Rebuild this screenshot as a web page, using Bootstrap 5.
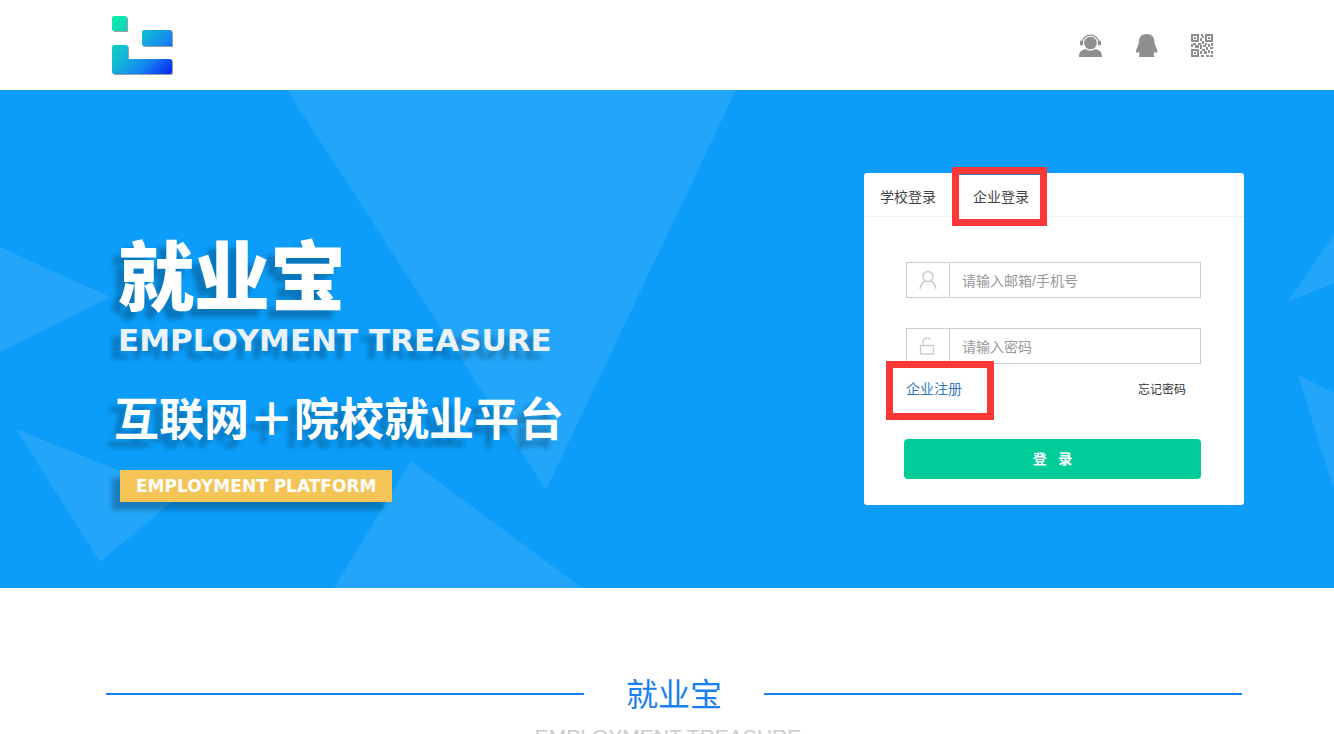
<!DOCTYPE html>
<html lang="zh-CN">
<head>
<meta charset="utf-8">
<meta name="viewport" content="width=device-width, initial-scale=1">
<title>就业宝</title>
<link href="https://cdn.jsdelivr.net/npm/bootstrap@5.3.0/dist/css/bootstrap.min.css" rel="stylesheet">
<style>
  body { font-family: "Liberation Sans", "Noto Sans CJK SC", sans-serif; font-size: 14px; color: #444; overflow: hidden; }
  .page-gutter { padding-left: 106px; padding-right: 90px; }
  .site-header { min-height: 90px; }
  .site-tools { gap: 32px; padding-right: 30px; color: #8f8f8f; }
  .hero { background: #0b9df9; min-height: 498px; }
  .hero-art { color: #23a6fa; }
  .hero-copy { color: #fff; padding: 144px 0 0 8px; text-shadow: -8px 8px 5px rgba(0, 0, 0, .25); }
  .hero-title { font-size: 76px; line-height: 90px; font-weight: 900; margin: 0 0 0 4px; }
  .hero-en { font-family: "DejaVu Sans", sans-serif; font-size: 31px; line-height: 32px; font-weight: 700; color: #eaf3fb; margin: 0 0 0 4px; }
  .hero-slogan { font-size: 45px; line-height: 60px; font-weight: 700; margin: 35px 0 0; }
  .hero-tag { background: #f5c456; font-family: "DejaVu Sans", sans-serif; font-size: 17px; line-height: 32px; font-weight: 700; padding: 0 16px; margin: 19px 0 0 6px; text-shadow: none; box-shadow: -8px 8px 5px rgba(0, 0, 0, .25); }
  .login-panel { width: 380px; margin-top: 83px; border-radius: 3px; }
  .login-tabs { border-bottom: 1px solid #f0f0f0; }
  .login-tabs .tab-btn { border: 0; border-top: 2px solid transparent; background: none; color: #444; height: 43px; padding: 3px 16px 0; line-height: 24px; }
  .login-tabs .tab-btn.active { border-top-color: #337ab7; }
  .login-tabs .tab-slot { margin-right: 5px; }
  .login-form { padding: 45px 43px 26px 42px; }
  .login-form .input-group { height: 36px; margin-bottom: 30px; }
  .login-form .input-group-text { width: 44px; background: #fff; border-color: #ccc; color: #ccc; padding: 0; }
  .login-form .form-control { font-size: 14px; border-color: #ccc; padding: 2px 12px 0; }
  .login-form .form-control::placeholder { color: #999; opacity: 1; }
  .login-form .input-group.last-field { margin-bottom: 0; }
  .login-links { height: 75px; padding: 15px 15px 0 0; line-height: 20px; }
  .login-links a { text-decoration: none; }
  .register-link { color: #337ab7; }
  .forgot-link { color: #333; font-size: 12px; line-height: 22px; }
  .btn-login { height: 40px; background: #00cc99; color: #fff; font-size: 14px; font-weight: 700; border-radius: 4px; margin-left: -2px; width: calc(100% + 2px); }
  .btn-login:hover { background: #00b888; color: #fff; }
  .callout { border: 7px solid #fb3838; pointer-events: none; z-index: 6; }
  .callout-tab { inset: -6px -2px -10px -5px; }
  .callout-register { inset: -18px -32px -21px -20px; }
  .section-head { padding-top: 80px; padding-right: 92px; }
  .section-rule { height: 2px; background: #1a80f0; margin-top: 4px; }
  .section-title { color: #1a80f0; font-family: "Noto Sans CJK SC", sans-serif; font-size: 32px; line-height: 48px; font-weight: 400; padding: 0 42px; }
  .section-sub { font-size: 21px; line-height: 24px; color: #ccc; padding-top: 9px; padding-right: 12px; }
  @media (max-width: 1100px) {
    body { overflow: auto; }
    .page-gutter { padding-left: 20px; padding-right: 20px; }
    .login-panel { margin: 30px auto; }
    .hero-copy { padding-top: 30px; }
  }
</style>
</head>
<body>
<header class="site-header page-gutter d-flex align-items-center justify-content-between bg-white">
  <a href="#" class="ps-1" aria-label="就业宝">
    <svg class="d-block" width="66" height="64" viewBox="0 0 66 64" aria-hidden="true">
      <defs>
        <linearGradient id="lg" x1="2" y1="4" x2="62" y2="60" gradientUnits="userSpaceOnUse">
          <stop offset="0" stop-color="#0df0a4"/><stop offset=".45" stop-color="#12b4d8"/><stop offset=".7" stop-color="#1684f4"/><stop offset="1" stop-color="#0628ee"/>
        </linearGradient>
        <path id="logo-shape" d="M4 3h11a2 2 0 0 1 2 2v13H4a2 2 0 0 1-2-2V5a2 2 0 0 1 2-2zM34 17h26a2 2 0 0 1 2 2v14H34a2 2 0 0 1-2-2V19a2 2 0 0 1 2-2zM4 32h12a2 2 0 0 1 2 2v12h42a2 2 0 0 1 2 2v11a2 2 0 0 1-2 2H4a2 2 0 0 1-2-2V34a2 2 0 0 1 2-2z"/>
      </defs>
      <use href="#logo-shape" x="1" y="1" fill="#888" opacity=".8"/>
      <use href="#logo-shape" fill="url(#lg)"/>
    </svg>
  </a>
  <nav class="site-tools d-flex align-items-center" aria-label="工具">
    <a href="#" class="text-reset" aria-label="客服"><svg class="d-block" width="24" height="24" viewBox="0 0 24 24" fill="currentColor"><circle cx="12.500" cy="10" r="6.300"/><path d="M4 9.500a8.600 8.600 0 0 1 17 0" fill="none" stroke="currentColor" stroke-width="1.200"/><rect x="2" y="7.500" width="3" height="5" rx="1.300"/><rect x="20" y="7.500" width="3" height="5" rx="1.300"/><path d="M1 24c0-5 2-7 6.500-8q5 3.500 10 0c4.500 1 6.500 3 6.500 8z"/></svg></a>
    <a href="#" class="text-reset" aria-label="QQ"><svg class="d-block" width="24" height="24" viewBox="0 0 24 24" fill="currentColor"><path d="M12.700 1c4.600 0 7.800 3 7.800 7.800 0 1.700.4 3 1.300 4.700 1.400 2.800 1.900 4.700 1.300 6.200-.5.500-1.400-.2-2.200-1.100-.3 1.500-.8 2.400-1.500 3 1 .6 1.300 1.400 1 2.400H5c-.3-1 0-1.800 1-2.400-.7-.6-1.200-1.500-1.500-3-.8.9-1.700 1.600-2.200 1.100-.6-1.500-.1-3.400 1.300-6.200.9-1.700 1.300-3 1.300-4.700C4.900 4 8.100 1 12.700 1z"/></svg></a>
    <a href="#" class="text-reset" aria-label="二维码"><svg class="d-block" width="24" height="24" viewBox="0 0 24 24" fill="currentColor" fill-rule="evenodd"><path d="M1 1h8v8H1zM3 3v4h4V3zM15 1h8v8h-8zM17 3v4h4V3zM1 16h8v8H1zM3 18v4h4v-4zM4 4h2v2H4zM18 4h2v2h-2zM4 19h2v2H4zM11 1h2v2h-2zM12 3h2v2h-2zM10 5h2v3h-2zM12 8h2v3h-2zM1 11h2v3H1zM3 10h3v2H3zM5 12h4v3H5zM8 10h3v2H8zM10 12h2v4h-2zM13 12h3v2h-3zM15 10h2v2h-2zM18 11h2v3h-2zM21 10h2v3h-2zM20 14h3v2h-3zM12 16h3v2h-3zM16 14h2v3h-2zM10 18h2v3h-2zM11 22h3v2h-3zM14 18h3v3h-3zM18 17h2v3h-2zM21 18h2v3h-2zM16 22h3v2h-3zM20 22h3v2h-3z"/></svg></a>
  </nav>
</header>

<main>
  <section class="hero position-relative">
    <svg class="hero-art position-absolute top-0 start-0 w-100 h-100" viewBox="0 0 1334 498" preserveAspectRatio="none" fill="currentColor" aria-hidden="true">
      <path d="M287 0H736L546 400zM0 157L110 207L0 262zM16 339L180 405L100 472zM411 371L582 498H334zM1287 212L1334 145V193zM1298 285L1334 303V400z"/>
    </svg>
    <div class="page-gutter position-relative d-flex flex-wrap justify-content-between align-items-start">
      <div class="hero-copy">
        <h1 class="hero-title">就业宝</h1>
        <p class="hero-en">EMPLOYMENT TREASURE</p>
        <p class="hero-slogan">互联网＋院校就业平台</p>
        <p class="hero-tag d-inline-block">EMPLOYMENT PLATFORM</p>
      </div>
      <div class="login-panel bg-white">
        <div class="login-tabs d-flex" role="tablist">
          <div class="tab-slot"><button type="button" class="tab-btn" role="tab" aria-selected="false">学校登录</button></div>
          <div class="tab-slot position-relative"><button type="button" class="tab-btn active" role="tab" aria-selected="true">企业登录</button><span class="callout callout-tab position-absolute"></span></div>
        </div>
        <form class="login-form">
          <div class="input-group">
            <label class="input-group-text justify-content-center rounded-0" for="account" aria-label="邮箱/手机号"><svg width="20" height="20" viewBox="0 0 20 20" fill="none" stroke="currentColor" stroke-width="1.500"><circle cx="10" cy="6.500" r="5"/><path d="M2 19c.5-4 2.500-6.500 5.500-8M18 19c-.5-4-2.500-6.500-5.500-8"/></svg></label>
            <input type="text" id="account" class="form-control rounded-0" placeholder="请输入邮箱/手机号">
          </div>
          <div class="input-group last-field">
            <label class="input-group-text justify-content-center rounded-0" for="password" aria-label="密码"><svg width="20" height="20" viewBox="0 0 20 20" fill="none" stroke="currentColor" stroke-width="1.300"><path d="M2.500 9.500h13v8.500h-13zM5 9.500V6a4 4 0 0 1 7.500-2"/></svg></label>
            <input type="password" id="password" class="form-control rounded-0" placeholder="请输入密码">
          </div>
          <div class="login-links d-flex justify-content-between align-items-start">
            <span class="position-relative"><a href="#" class="register-link">企业注册</a><span class="callout callout-register position-absolute"></span></span>
            <a href="#" class="forgot-link">忘记密码</a>
          </div>
          <button type="submit" class="btn btn-login py-0">登&nbsp;&nbsp; 录</button>
        </form>
      </div>
    </div>
  </section>

  <section class="section-head page-gutter">
    <div class="d-flex align-items-center">
      <span class="section-rule flex-fill"></span>
      <h2 class="section-title m-0">就业宝</h2>
      <span class="section-rule flex-fill"></span>
    </div>
    <p class="section-sub text-center mb-4">EMPLOYMENT TREASURE</p>
  </section>
</main>
<script src="https://cdn.jsdelivr.net/npm/bootstrap@5.3.0/dist/js/bootstrap.bundle.min.js"></script>
</body>
</html>
